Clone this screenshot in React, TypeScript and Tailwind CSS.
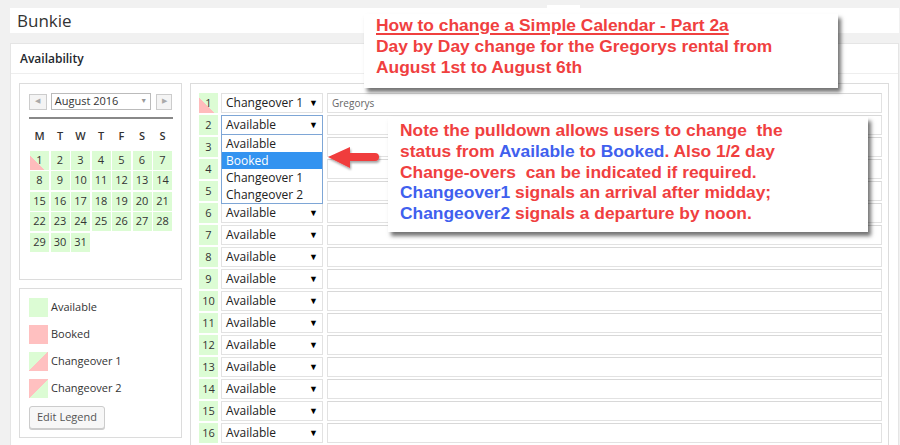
import React from 'react';

const GREEN = 'bg-[#dcfcd4]';

type Status = 'Available' | 'Booked' | 'Changeover 1' | 'Changeover 2';

const rows: { day: number; status: Status; note: string }[] = Array.from({ length: 16 }, (_, i) => ({
  day: i + 1,
  status: i === 0 ? 'Changeover 1' : 'Available',
  note: i === 0 ? 'Gregorys' : '',
}));

function DayCell({ day }: { day: number }) {
  if (day === 1) {
    return (
      <div className="w-[19px] h-[20px] shrink-0 flex items-center justify-center text-[11px] text-[#333] bg-[linear-gradient(to_top_right,#ffbcbc_40%,#dcfcd4_40%)]">
        {day}
      </div>
    );
  }
  return (
    <div className={`w-[19px] h-[20px] shrink-0 flex items-center justify-center text-[11px] text-[#333] ${GREEN}`}>
      {day}
    </div>
  );
}

function FakeSelect({ value, focused, hidden }: { value: string; focused?: boolean; hidden?: boolean }) {
  return (
    <div
      className={`w-[102px] h-[20px] shrink-0 flex items-center justify-between pl-[4px] pr-[4px] bg-white text-[12px] text-[#222] border ${
        focused ? 'border-[#7ea6d6]' : 'border-[#e2e2e2]'
      }`}
    >
      {/* rows under the open pulldown are covered, so they carry no text */}
      {!hidden && <span>{value}</span>}
      {!hidden && <span className="text-[9px] text-black">▼</span>}
    </div>
  );
}

function CalendarBox() {
  const cells: number[] = [];
  for (let d = 1; d <= 31; d++) cells.push(d);
  return (
    <div className="w-[163px] h-[197px] border border-[#dcdcdc] bg-white px-[9px] pt-[9px]">
      <div className="flex items-center gap-[3px]">
        <div className="w-[18px] h-[16px] border border-[#ccc] bg-[#f4f4f4] flex items-center justify-center text-[7px] text-[#aaa]">◀</div>
        <div className="w-[102px] h-[17px] ml-[1px] border border-[#bbb] bg-white flex items-center justify-between px-[3px] text-[11px] text-[#333]">
          <span>August 2016</span>
          <span className="text-[7px] text-[#999]">▼</span>
        </div>
        <div className="w-[16px] h-[16px] ml-[2px] border border-[#ccc] bg-[#f4f4f4] flex items-center justify-center text-[7px] text-[#aaa]">▶</div>
      </div>
      <div className="h-[2px] bg-[#888] mt-[7px] w-[144px]" />
      <div className="grid grid-cols-[repeat(7,19px)] gap-x-[1.5px] ml-[1px] mt-[9px] text-[11px] font-semibold text-[#333] text-center">
        {['M', 'T', 'W', 'T', 'F', 'S', 'S'].map((d, i) => (
          <div key={i}>{d}</div>
        ))}
      </div>
      <div className="grid grid-cols-[repeat(7,19px)] auto-rows-[19px] gap-x-[1.5px] gap-y-[1.5px] ml-[1px] mt-[6px] text-[11px] text-[#333] text-center">
        {cells.map((d) =>
          d === 1 ? (
            <div key={d} className="flex items-center justify-center bg-[linear-gradient(to_top_right,#ffbcbc_38%,#dcfcd4_38%)]">
              {d}
            </div>
          ) : (
            <div key={d} className={`flex items-center justify-center ${GREEN}`}>
              {d}
            </div>
          )
        )}
      </div>
    </div>
  );
}

function LegendBox() {
  const items: { label: string; cls: string }[] = [
    { label: 'Available', cls: 'bg-[#dcfcd4]' },
    { label: 'Booked', cls: 'bg-[#ffc0c0]' },
    { label: 'Changeover 1', cls: 'bg-[linear-gradient(to_top_left,#ffc0c0_50%,#dcfcd4_50%)]' },
    { label: 'Changeover 2', cls: 'bg-[linear-gradient(to_bottom_right,#ffc0c0_50%,#dcfcd4_50%)]' },
  ];
  return (
    <div className="w-[163px] h-[150px] border border-[#dcdcdc] bg-white px-[9px] pt-[9px]">
      <div className="flex flex-col gap-[8px]">
        {items.map((it) => (
          <div key={it.label} className="flex items-center gap-[3px] text-[11px] text-[#333]">
            <div className={`w-[19px] h-[19px] ${it.cls}`} />
            <span>{it.label}</span>
          </div>
        ))}
      </div>
      <button className="mt-[8px] h-[23px] px-[7px] border border-[#ccc] rounded-[3px] bg-[#f7f7f7] text-[11px] text-[#555] shadow-[0_1px_0_#ccc]">
        Edit Legend
      </button>
    </div>
  );
}

export default function App() {
  return (
    <div className="relative w-[900px] h-[445px] overflow-hidden bg-[#f1f1f1] font-['Open_Sans',sans-serif] pt-[8px]">
      <div className="ml-[10px] mr-[1px] h-[25px] bg-white flex items-center px-[7px] text-[17px] text-[#333]">Bunkie</div>

      <div className="ml-[10px] mr-[1px] mt-[10px] bg-white border border-[#e5e5e5] h-[420px]">
        <div className="h-[30px] flex items-center px-[9px] text-[12px] font-semibold text-[#23282d] border-b border-[#eee]">
          Availability
        </div>
        <div className="flex gap-[8px] pl-[8px] pt-[9px]">
          <div className="flex flex-col gap-[8px]">
            <CalendarBox />
            <LegendBox />
          </div>
          <div className="w-[699px] h-[400px] border border-[#dcdcdc] pl-[8px] pr-[6px] pt-[9px] flex flex-col gap-[2px]">
            {rows.map((r) => (
              <div key={r.day} className="flex items-center">
                <DayCell day={r.day} />
                <div className="ml-[3px]">
                  <FakeSelect value={r.status} focused={r.day === 2} hidden={r.day >= 3 && r.day <= 5} />
                </div>
                <div className="ml-[4px] flex-1 h-[20px] border border-[#e2e2e2] border-t-[#d8d8d8] bg-white flex items-center px-[4px] text-[10px] text-[#666]">
                  {r.note}
                </div>
              </div>
            ))}
          </div>
        </div>
      </div>

      {/* open pulldown of day 2 */}
      <div className="absolute left-[221px] top-[134px] w-[102px] border border-[#7ea6d6] bg-white text-[12px] text-[#222] flex flex-col">
        <div className="h-[17px] flex items-center pl-[4px]">Available</div>
        <div className="h-[17px] flex items-center pl-[4px] bg-[#3393f0] text-white">Booked</div>
        <div className="h-[17px] flex items-center pl-[4px]">Changeover 1</div>
        <div className="h-[17px] flex items-center pl-[4px]">Changeover 2</div>
      </div>

      {/* red arrow */}
      <svg className="absolute left-[326px] top-[144px]" width="56" height="30" viewBox="0 0 56 30">
        <defs>
          <filter id="sh" x="-20%" y="-20%" width="150%" height="160%">
            <feDropShadow dx="1" dy="2" stdDeviation="1.2" floodColor="#000" floodOpacity="0.35" />
          </filter>
        </defs>
        <path d="M2 13 L24 3 L24 9 L49 9 Q53 9 53 13 Q53 17 49 17 L24 17 L24 24 Z" fill="#f03c3c" filter="url(#sh)" />
      </svg>

      <div className="absolute left-[547px] top-[5px] w-[33px] h-[12px] bg-white" />

      {/* annotation 1 */}
      <div className="absolute left-[364px] top-[14px] w-[474px] h-[74px] bg-white shadow-[3px_4px_4px_rgba(0,0,0,0.55)] pl-[12px] pt-[1px] font-['Liberation_Sans',Arial,sans-serif] font-bold text-[17.4px] leading-[21px] text-[#f0403f]">
        <div className="underline decoration-[2px] underline-offset-[2px]">How to change a Simple Calendar - Part 2a</div>
        <div>Day by Day change for the Gregorys rental from</div>
        <div>August 1st to August 6th</div>
      </div>

      {/* annotation 2 */}
      <div className="absolute left-[388px] top-[117px] w-[480px] h-[115px] bg-white shadow-[3px_4px_4px_rgba(0,0,0,0.55)] pl-[12px] pt-[3px] font-['Liberation_Sans',Arial,sans-serif] font-bold text-[17.4px] leading-[20.8px] text-[#f0403f] whitespace-pre">
        <div>Note the pulldown allows users to change  the</div>
        <div>
          status from <span className="text-[#4060ee]">Available</span> to <span className="text-[#4060ee]">Booked</span>. Also 1/2 day
        </div>
        <div>Change-overs  can be indicated if required.</div>
        <div>
          <span className="text-[#4060ee]">Changeover1</span> signals an arrival after midday;
        </div>
        <div>
          <span className="text-[#4060ee]">Changeover2</span> signals a departure by noon.
        </div>
      </div>
    </div>
  );
}
